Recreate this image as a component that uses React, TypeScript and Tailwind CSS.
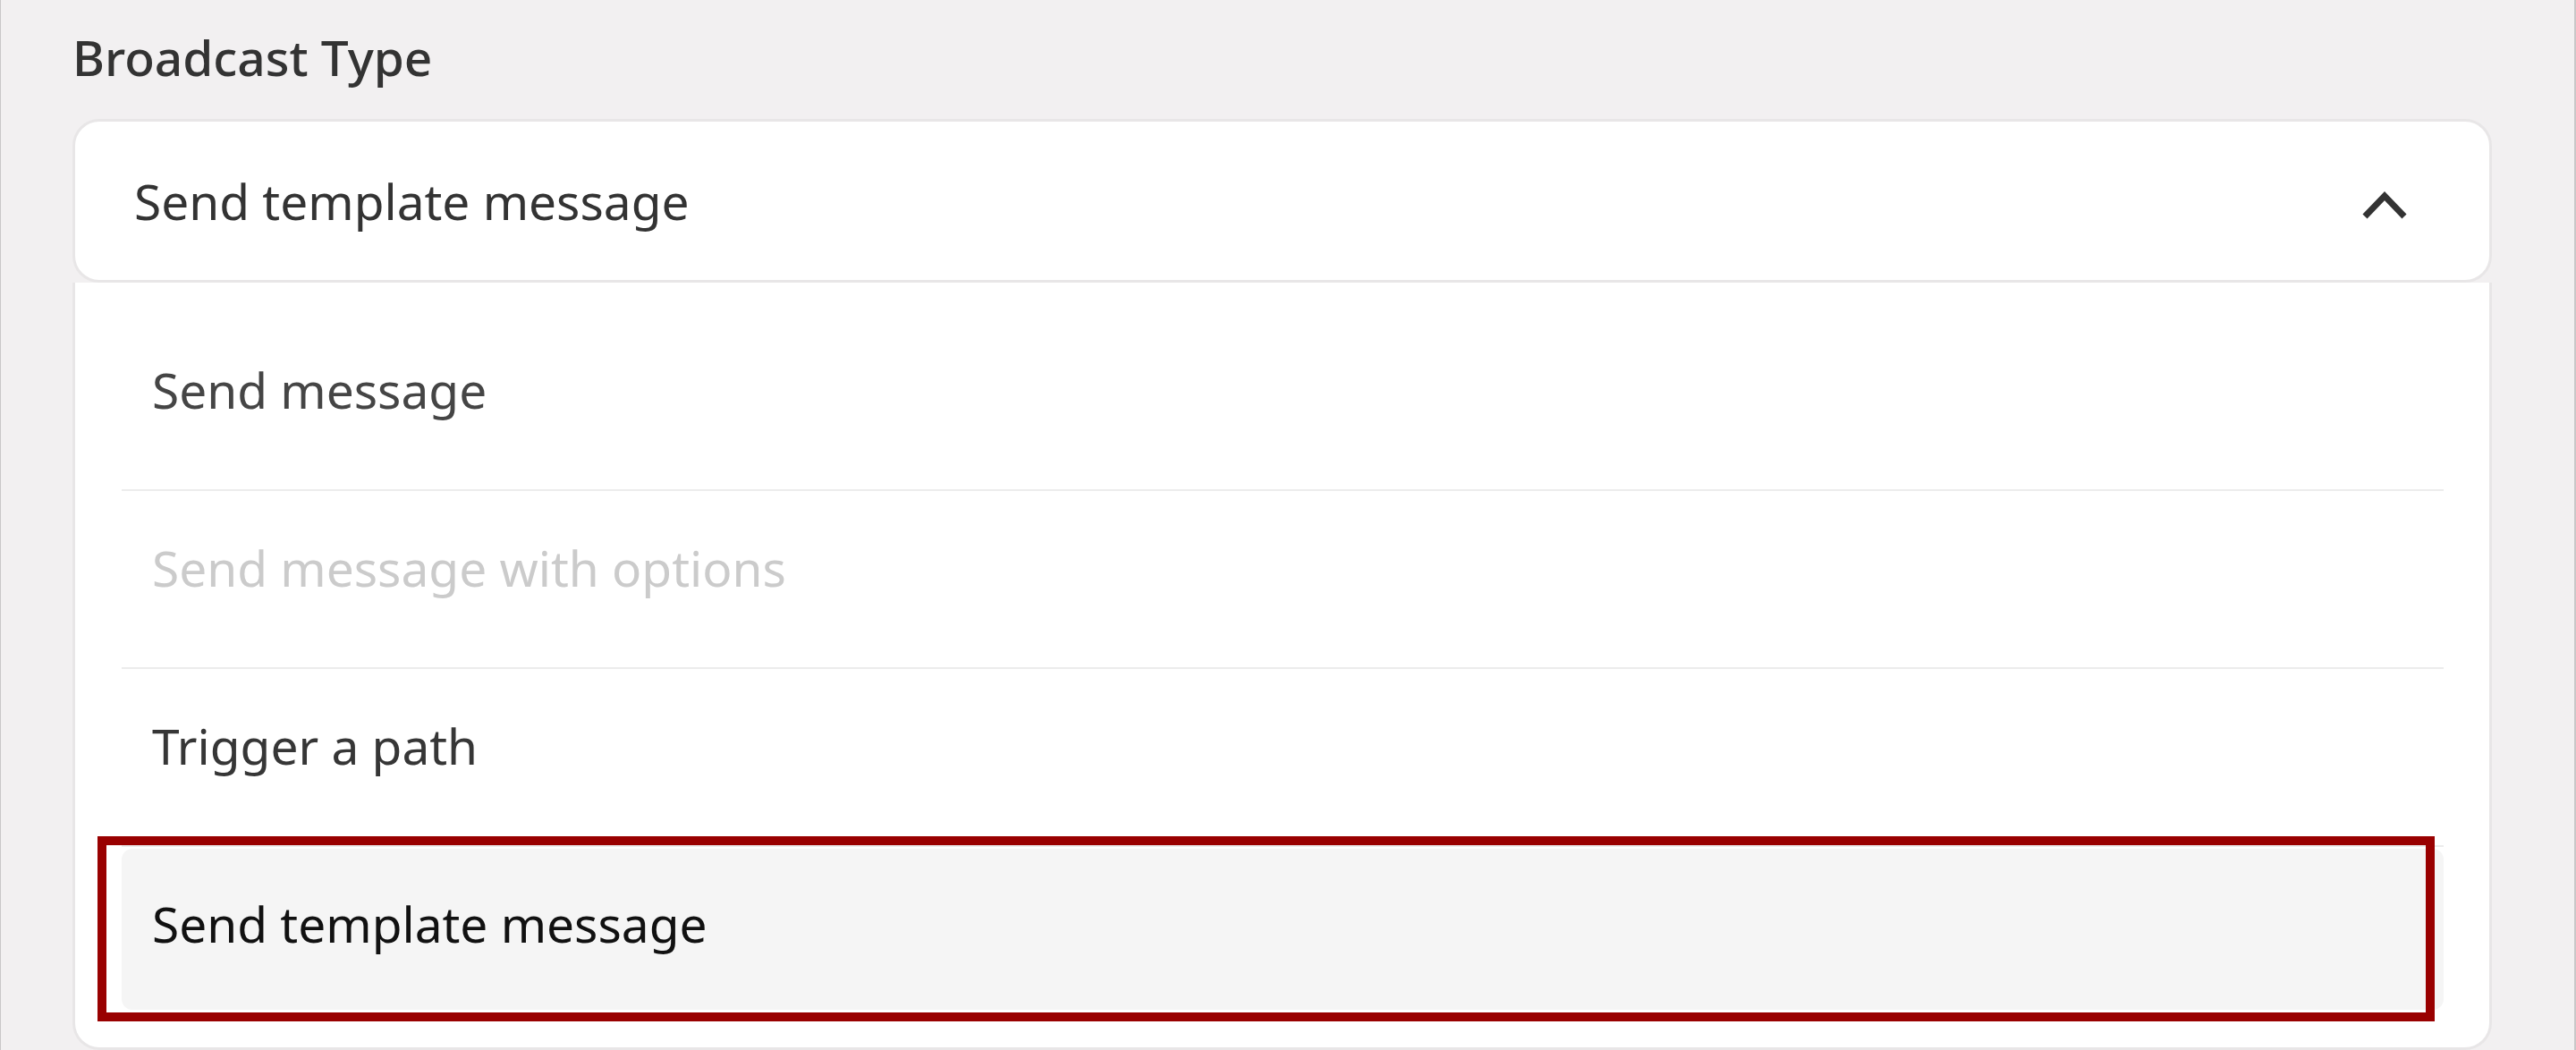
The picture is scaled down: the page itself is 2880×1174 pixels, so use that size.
import React from "react";

const font = { fontFamily: '"Noto Sans", "Open Sans", sans-serif' };

function Chevron() {
  return (
    <svg width="60" height="40" viewBox="0 0 60 40" className="mt-[11px] shrink-0" aria-hidden="true">
      <polyline points="8,32 30,9 52,32" fill="none" stroke="#333333" strokeWidth="7" strokeLinecap="butt" strokeLinejoin="miter" />
    </svg>
  );
}

type Opt = { label: string; color: string; selected?: boolean };

const options: Opt[] = [
  { label: "Send message", color: "text-[#454545]" },
  { label: "Send message with options", color: "text-[#cbcbcb]" },
  { label: "Trigger a path", color: "text-[#363636]" },
  { label: "Send template message", color: "text-[#111111]", selected: true },
];

export default function App() {
  return (
    <div
      className="h-[1174px] overflow-hidden bg-[#f2f0f1] border-l border-r-2 border-[#c9c7c8] pl-[80px] pr-[92px] pt-[36px]"
      style={font}
    >
      <h2 className="h-[56px] text-[55px] leading-[56px] font-medium text-[#333333]">Broadcast Type</h2>
      <div className="mt-[41px]">
        <div className="h-[183px] rounded-[30px] border-[3px] border-[#e8e6e7] bg-white flex items-center justify-between pl-[66px] pr-[87px]">
          <span className="text-[55px] leading-[56px] text-[#333333]">Send template message</span>
          <Chevron />
        </div>
        <div className="bg-white border-x-[3px] border-b-[3px] border-[#e8e6e7] rounded-b-[30px] pl-[52px] pr-[51px] pt-[36px] pb-[42px] flex flex-col">
          {options.map((o, i) => {
            const last = i === options.length - 1;
            return (
              <div
                key={o.label}
                className={last ? "relative" : "pb-[15px] border-b-2 border-[#ececec] mb-[2px]"}
              >
                <div
                  className={
                    "h-[180px] flex items-center pl-[34px] pb-[12px] rounded-[12px] " +
                    (o.selected ? "bg-[#f5f5f5]" : "")
                  }
                >
                  <span className={"text-[55px] leading-[56px] " + o.color}>{o.label}</span>
                </div>
                {o.selected && (
                  <div className="absolute left-[-27px] top-[-14px] right-[10px] bottom-[-13px] border-[10px] border-[#990000] pointer-events-none" />
                )}
              </div>
            );
          })}
        </div>
      </div>
    </div>
  );
}
